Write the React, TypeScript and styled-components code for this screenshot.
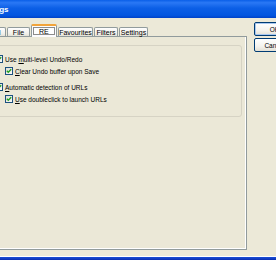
import React from 'react'
import styled, { createGlobalStyle } from 'styled-components'

const GlobalStyle = createGlobalStyle`
  html, body {
    margin: 0;
    padding: 0;
  }
  body {
    width: 276px;
    height: 260px;
    overflow: hidden;
    background: #ece9d8;
    font-family: 'Liberation Sans', Arial, sans-serif;
  }
`

const tabs = [
  { text: 'General', width: 36 },
  { text: 'File', width: 23 },
  { text: 'RE', width: 26, active: true },
  { text: 'Favourites', width: 35 },
  { text: 'Filters', width: 24 },
  { text: 'Settings', width: 29 },
]

const options = [
  { text: 'Use multi-level Undo/Redo', key: 'm', level: 0 },
  { text: 'Clear Undo buffer upon Save', key: 'C', level: 1 },
  { text: 'Automatic detection of URLs', key: 'A', level: 0, gap: true },
  { text: 'Use doubleclick to launch URLs', key: 'U', level: 1 },
]

const Label = ({ text, hotkey }: { text: string; hotkey: string }) => {
  const i = text.indexOf(hotkey)
  if (i < 0) return <>{text}</>
  return (
    <>
      {text.slice(0, i)}
      <u>{text[i]}</u>
      {text.slice(i + 1)}
    </>
  )
}

const App = () => {
  return (
    <>
      <GlobalStyle />
      <Window>
        <TitleBar>Settings</TitleBar>
        <Body>
          <TabControl>
            <TabStrip>
              {tabs.map((tab) => (
                <Tab key={tab.text} $width={tab.width} $active={tab.active}>
                  {tab.active ? <FocusRect>{tab.text}</FocusRect> : tab.text}
                </Tab>
              ))}
            </TabStrip>
            <Panel>
              <GroupBox>
                {options.map((item) => (
                  <OptionRow key={item.text} $level={item.level} $gap={item.gap}>
                    <CheckBox>
                      <svg width="6" height="6" viewBox="0 0 6 6">
                        <path d="M0.8 2.8 L2.3 4.3 L5.2 1.3" fill="none" stroke="#21a121" strokeWidth="1.4" />
                      </svg>
                    </CheckBox>
                    <span>
                      <Label text={item.text} hotkey={item.key} />
                    </span>
                  </OptionRow>
                ))}
              </GroupBox>
            </Panel>
          </TabControl>
          <ButtonColumn>
            <Button $default>OK</Button>
            <Button>Cancel</Button>
          </ButtonColumn>
        </Body>
        <BottomFrame />
      </Window>
    </>
  )
}

export default App

const Window = styled.div`
  display: flex;
  flex-direction: column;
  width: 343px;
  height: 260px;
  margin-left: -40px;
  background: #ece9d8;
`

const TitleBar = styled.div`
  height: 18px;
  flex-shrink: 0;
  display: flex;
  align-items: center;
  padding-left: 17px;
  background: linear-gradient(#0a5fe8, #2a78f5 15%, #0c5fe6 45%, #0356e0 85%, #0042c8);
  color: #fff;
  font-size: 8px;
  font-weight: 700;
`

const Body = styled.div`
  flex: 1;
  display: flex;
  align-items: flex-start;
  gap: 7px;
  padding-left: 8px;
`

const TabControl = styled.div`
  display: flex;
  flex-direction: column;
  width: 279px;
  margin-top: 6px;
`

const TabStrip = styled.div`
  display: flex;
  align-items: flex-end;
  gap: 1px;
  height: 12px;
  padding-left: 2px;
  position: relative;
  z-index: 1;
`

const Tab = styled.div<{ $width: number; $active?: boolean }>`
  box-sizing: border-box;
  width: ${(p) => p.$width}px;
  height: ${(p) => (p.$active ? 13 : 9)}px;
  margin-bottom: ${(p) => (p.$active ? -1 : 0)}px;
  display: flex;
  align-items: center;
  justify-content: center;
  border: 1px solid #919b9c;
  border-bottom: none;
  border-top: ${(p) => (p.$active ? '2px solid #f2a43a' : '1px solid #919b9c')};
  border-radius: 2px 2px 0 0;
  background: ${(p) => (p.$active ? '#fcfcfe' : 'linear-gradient(#fefefe, #f1f0ea 70%, #e3e1d6)')};
  padding: ${(p) => (p.$active ? '1px 1px 2px 1px' : '0')};
  font-size: 7px;
  color: #000;
  white-space: nowrap;
`

const FocusRect = styled.span`
  box-sizing: border-box;
  width: 100%;
  height: 100%;
  display: flex;
  align-items: center;
  padding-left: 5px;
  border: 1px solid #8c8c8c;
  background: #fff;
`

const Panel = styled.div`
  box-sizing: border-box;
  height: 214px;
  border: 1px solid #919b9c;
  box-shadow: inset -1px -1px 0 #fff;
  background: #ebe8d7;
  padding: 8px 4px 0 5px;
`

const GroupBox = styled.div`
  box-sizing: border-box;
  height: 72px;
  border: 1px solid #d6d3c4;
  border-radius: 3px;
  padding: 7px 0 0 20px;
`

const OptionRow = styled.div<{ $level: number; $gap?: boolean }>`
  display: flex;
  align-items: center;
  gap: 2px;
  height: 12px;
  margin-top: ${(p) => (p.$gap ? 4 : 0)}px;
  padding-left: ${(p) => p.$level * 10}px;
  font-size: 6.5px;
  color: #000;
  white-space: nowrap;
`

const CheckBox = styled.span`
  box-sizing: border-box;
  width: 8px;
  height: 8px;
  flex-shrink: 0;
  display: flex;
  align-items: center;
  justify-content: center;
  border: 1px solid #1c5180;
  background: linear-gradient(135deg, #dcdcd5, #fbfbf9);
`

const ButtonColumn = styled.div`
  display: flex;
  flex-direction: column;
  gap: 2px;
  margin-top: 4px;
`

const Button = styled.div<{ $default?: boolean }>`
  box-sizing: border-box;
  width: 41px;
  height: 14px;
  display: flex;
  align-items: center;
  justify-content: center;
  border: 1px solid #003c74;
  border-radius: 2px;
  background: linear-gradient(#ffffff, #f4f3ee 60%, #e3e0d5);
  box-shadow: ${(p) => (p.$default ? 'inset 0 0 0 1px #a9c8f0' : 'none')};
  font-size: 6.5px;
  color: #000;
`

const BottomFrame = styled.div`
  height: 4px;
  flex-shrink: 0;
  border-top: 1px solid #fff;
  box-sizing: border-box;
  background: linear-gradient(#1b4fd8, #0a2eb0);
`
